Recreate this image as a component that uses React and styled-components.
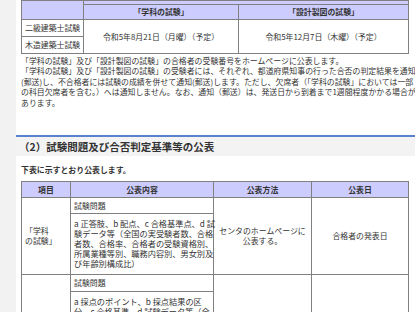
import React from "react";
import styled, { createGlobalStyle } from "styled-components";

const Global = createGlobalStyle`
  html, body { margin: 0; padding: 0; background: #fff; }
  body {
    font-family: "Noto Sans CJK JP", "Noto Sans", sans-serif;
    color: #333;
    font-size: 7.9px;
  }
`;

const Page = styled.div`
  display: flex;
  width: 415px;
  height: 312px;
  overflow: hidden;
`;

const Side = styled.div`
  flex: none;
  width: 16px;
  background: #f2f2f2;
`;

const Main = styled.div`
  flex: none;
  width: 404px;
  display: flex;
  flex-direction: column;
`;

const Table = styled.table`
  border-collapse: collapse;
  table-layout: fixed;
  width: 387px;
  margin: ${(p) => p.$top || "0"} 0 0 5px;
  line-height: 10px;
`;

const Th = styled.th`
  background: #ccccff;
  border: 1px solid #808080;
  font-weight: 700;
  text-align: center;
  padding: ${(p) => p.$pad || "2px 3px"};
  height: ${(p) => p.$h || "auto"};
  vertical-align: middle;
`;

const Td = styled.td`
  border: 1px solid #808080;
  padding: ${(p) => p.$pad || "3px 3px"};
  text-align: ${(p) => p.$align || "left"};
  vertical-align: middle;
  font-size: ${(p) => p.$fs || "inherit"};
  white-space: ${(p) => (p.$nowrap ? "nowrap" : "normal")};
`;

const Para = styled.p`
  margin: 2px 0 0 5px;
  line-height: 10.4px;
  white-space: nowrap;
`;

const Band = styled.h3`
  margin: 27px 0 0 0;
  height: 19px;
  border-top: 2px solid #5a82cc;
  background: #f3f3f3;
  font-size: 10.5px;
  font-weight: 700;
  line-height: 19px;
  padding-left: 3px;
  color: #333;
`;

const Lead = styled.p`
  margin: 9px 0 0 5px;
  font-weight: 700;
  line-height: 10.4px;
`;

export default function App() {
  return (
    <>
      <Global />
      <Page>
        <Side />
        <Main>
          <Table>
            <colgroup>
              <col style={{ width: 62 }} />
              <col style={{ width: 155 }} />
              <col style={{ width: 170 }} />
            </colgroup>
            <thead>
              <tr>
                <Th rowSpan={2}></Th>
                <Th colSpan={2} $h="3px" $pad="0"></Th>
              </tr>
              <tr>
                <Th>「学科の試験」</Th>
                <Th>「設計製図の試験」</Th>
              </tr>
            </thead>
            <tbody>
              <tr>
                <Td $nowrap>二級建築士試験</Td>
                <Td rowSpan={2} $align="center">令和5年8月21日（月曜）（予定）</Td>
                <Td rowSpan={2} $align="center">令和5年12月7日（木曜）（予定）</Td>
              </tr>
              <tr>
                <Td $nowrap>木造建築士試験</Td>
              </tr>
            </tbody>
          </Table>
          <Para>
            「学科の試験」及び「設計製図の試験」の合格者の受験番号をホームページに公表します。
            <br />
            「学科の試験」及び「設計製図の試験」の受験者には、それぞれ、都道府県知事の行った合否の判定結果を通知
            <br />
            (郵送)し、不合格者には試験の成績を併せて通知(郵送)します。ただし、欠席者（「学科の試験」においては一部
            <br />
            の科目欠席者を含む。）へは通知しません。なお、通知（郵送）は、発送日から到着まで1週間程度かかる場合が
            <br />
            あります。
          </Para>
          <Band>（2）試験問題及び合否判定基準等の公表</Band>
          <Lead>下表に示すとおり公表します。</Lead>
          <Table $top="6px">
            <colgroup>
              <col style={{ width: 49 }} />
              <col style={{ width: 143 }} />
              <col style={{ width: 98 }} />
              <col style={{ width: 97 }} />
            </colgroup>
            <thead>
              <tr>
                <Th $pad="2.5px 3px">項目</Th>
                <Th $pad="2.5px 3px">公表内容</Th>
                <Th $pad="2.5px 3px">公表方法</Th>
                <Th $pad="2.5px 3px">公表日</Th>
              </tr>
            </thead>
            <tbody>
              <tr>
                <Td rowSpan={2}>「学科<br />の試験」</Td>
                <Td $pad="2.5px 3px">試験問題</Td>
                <Td rowSpan={2} $align="center">
                  センタのホームページに
                  <br />
                  公表する。
                </Td>
                <Td rowSpan={2} $align="center">合格者の発表日</Td>
              </tr>
              <tr>
                <Td $pad="4px 3px 6px" $fs="8.2px" $nowrap>
                  a 正答肢、b 配点、c 合格基準点、d 試<br />
                  験データ等（全国の実受験者数、合格<br />
                  者数、合格率、合格者の受験資格別、<br />
                  所属業種等別、職務内容別、男女別及<br />
                  び年齢別構成比）
                </Td>
              </tr>
              <tr>
                <Td rowSpan={2}></Td>
                <Td>試験問題</Td>
                <Td rowSpan={2}></Td>
                <Td rowSpan={2}></Td>
              </tr>
              <tr>
                <Td $pad="4px 3px 6px" $fs="8.2px" $nowrap>
                  a 採点のポイント、b 採点結果の区<br />
                  分、c 合格基準、d 試験データ等（全<br />
                  国の実受験者数、合格者数、合格率）
                </Td>
              </tr>
            </tbody>
          </Table>
        </Main>
      </Page>
    </>
  );
}
